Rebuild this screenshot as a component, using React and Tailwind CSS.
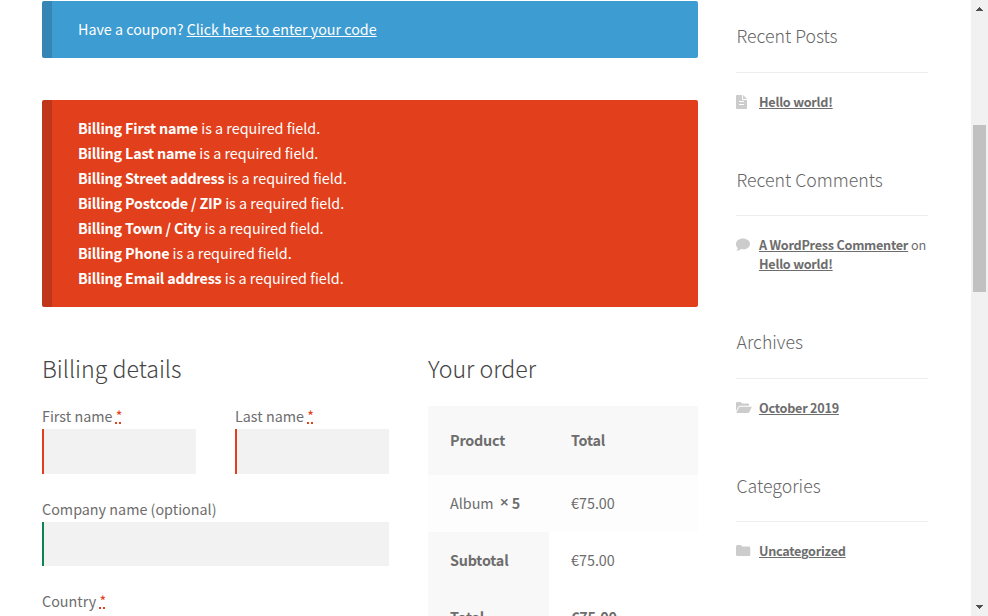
import React from "react";

const fieldErrors = [
  "First name",
  "Last name",
  "Street address",
  "Postcode / ZIP",
  "Town / City",
  "Phone",
  "Email address",
];

function Required() {
  return (
    <abbr
      title="required"
      className="text-[#e2401c] underline decoration-dotted decoration-[1.5px] underline-offset-0"
    >
      *
    </abbr>
  );
}

function Label({ text, required }) {
  return (
    <div className="h-[25px] whitespace-nowrap leading-[23px]">
      {text} {required && <Required />}
    </div>
  );
}

function Field({ label, required, valid, className = "" }) {
  return (
    <div className={className}>
      <Label text={label} required={required} />
      <input
        aria-label={label}
        className={
          "block w-full border-l-2 bg-[#f2f2f2] outline-none " +
          (valid ? "h-11 border-[#0f834d]" : "h-[45px] border-[#e2401c]")
        }
      />
    </div>
  );
}

function Widget({ title, icon, loose, className = "", children }) {
  return (
    <section className={className}>
      <h3 className="pl-[0.5px] text-[17.7px] font-light leading-[26px] text-[#666]">
        {title}
      </h3>
      <div className={"border-t border-[#ededed] " + (loose ? "mt-6" : "mt-[23px]")} />
      <div className="mt-[19px] flex text-[12.65px] leading-[19px]">
        <span className="w-[23px] shrink-0 pt-[3px] text-[#ccc]">{icon}</span>
        <div className="whitespace-nowrap">{children}</div>
      </div>
    </section>
  );
}

function Link({ children }) {
  return (
    <a className="font-bold tracking-[-0.02em] underline decoration-1 underline-offset-1">{children}</a>
  );
}

function Strong({ children }) {
  return <strong className="font-bold tracking-[-0.013em]">{children}</strong>;
}

const FileIcon = () => (
  <svg className="block" width="11" height="14" viewBox="0 0 11 14" fill="currentColor">
    <path
      d="M0 .8Q0 0 .8 0H6v4.200q0 .8.8.8H11v8.200q0 .8-.8.8H.8Q0 14 0 13.200zM7 0l4 4H7zM3 6v1h5V6zM3 9v1h5V9z"
      fillRule="evenodd"
    />
  </svg>
);

const CommentIcon = () => (
  <svg className="block" width="14" height="14" viewBox="0 0 14 14" fill="currentColor">
    <path d="M7 .5c3.900 0 7 2.300 7 5.400s-3.100 5.400-7 5.400c-.7 0-1.400-.1-2-.2C3.900 12.100 2.200 13 .4 13c.9-1 1.300-1.900 1.300-3C.6 9 0 7.500 0 5.900 0 2.800 3.100.5 7 .5z" />
  </svg>
);

const OpenFolderIcon = () => (
  <svg className="block" width="16" height="13" viewBox="0 0 16 13" fill="currentColor">
    <path d="M0 10.300V2Q0 1 1 1h3.600l1.500 1.500h6q1 0 1 1v1.300H4.200q-1.300 0-1.900 1.100z" />
    <path d="M4 5.800h11.200q.8 0 .4.700l-2.400 4.700q-.4.800-1.100.8H.8q-.6 0-.3-.6L3 6.400q.3-.6 1-.6z" />
  </svg>
);

const FolderIcon = () => (
  <svg className="block" width="15" height="13" viewBox="0 0 15 13" fill="currentColor">
    <path d="M0 2.500Q0 1 1.500 1h3.200l1.500 1.500h6.600q1.500 0 1.500 1.400v6.600q0 1.500-1.500 1.500H1.500Q0 12 0 10.500z" />
  </svg>
);

export default function App() {
  return (
    <div className="flex h-[616px] w-[988px] overflow-hidden bg-white font-['Noto_Sans_CJK_SC','Open_Sans',sans-serif] text-[14.35px] text-[#6d6d6d]">
      <main className="ml-[42px] w-[656px] shrink-0 pt-px">
        <div className="h-[57px] rounded-xs border-l-10 border-[#3585b5] bg-[#3d9cd2] pl-[26px] pt-[15px] text-[14.3px] leading-[25px] text-white">
          Have a coupon?{" "}
          <a className="underline decoration-1 underline-offset-1">Click here to enter your code</a>
        </div>

        <ul className="mt-[42px] h-[207px] rounded-xs border-l-10 border-[#bf3618] bg-[#e2401c] pl-[26px] pt-[15px] leading-[25px] text-white">
          {fieldErrors.map((name) => (
            <li key={name} className="h-[25px]">
              <Strong>Billing {name}</Strong> is a required field.
            </li>
          ))}
        </ul>

        <div className="flex gap-[39px] pt-[42px]">
          <section className="w-[347px]">
            <h3 className="h-[55px] text-[23.15px] font-light leading-[38px] text-[#444]">Billing details</h3>
            <div className="flex gap-[39px]">
              <Field label="First name" required className="w-[154px]" />
              <Field label="Last name" required className="w-[154px]" />
            </div>
            <Field label="Company name (optional)" valid className="mt-[23px]" />
            <div className="mt-[23px]">
              <Label text="Country" required />
            </div>
          </section>

          <section className="w-[270px]">
            <h3 className="h-[57px] text-[23.15px] font-light leading-[38px] text-[#444]">Your order</h3>
            <div className="grid grid-cols-[121px_149px] leading-[25px]">
              <div className="h-[69px] bg-[#f8f8f8] pl-[22px] pt-[21px]"><Strong>Product</Strong></div>
              <div className="h-[69px] bg-[#f8f8f8] pl-[22px] pt-[21px]"><Strong>Total</Strong></div>
              <div className="flex h-[57px] bg-[#fdfdfd] pl-[22px] pt-[15px]">
                <span>Album</span>
                <strong className="ml-1.5 flex font-bold">
                  <span className="w-3 font-['Noto_Sans'] text-base font-semibold leading-[25px]">×</span>
                  <span>5</span>
                </strong>
              </div>
              <div className="h-[57px] bg-[#fdfdfd] pl-[22px] pt-[15px]">€75.00</div>
              <div className="h-[57px] bg-[#f8f8f8] pl-[22px] pt-[15px]"><Strong>Subtotal</Strong></div>
              <div className="h-[57px] pl-[22px] pt-[15px]">€75.00</div>
              <div className="h-[57px] bg-[#f8f8f8] pl-[22px] pt-[15px]"><Strong>Total</Strong></div>
              <div className="h-[57px] pl-[22px] pt-[15px]"><Strong>€75.00</Strong></div>
            </div>
          </section>
        </div>
      </main>

      <aside className="ml-[38px] w-[192px] shrink-0 pt-[22px]">
        <Widget title="Recent Posts" icon={<FileIcon />} loose>
          <Link>Hello world!</Link>
        </Widget>
        <Widget title="Recent Comments" icon={<CommentIcon />} className="mt-[55px]">
          <Link>A WordPress Commenter</Link> on
          <br />
          <Link>Hello world!</Link>
        </Widget>
        <Widget title="Archives" icon={<OpenFolderIcon />} loose className="mt-[55px]">
          <Link>October 2019</Link>
        </Widget>
        <Widget title="Categories" icon={<FolderIcon />} className="mt-[55px]">
          <Link>Uncategorized</Link>
        </Widget>
      </aside>

      <div className="ml-auto flex w-[17px] shrink-0 flex-col items-center bg-[#f1f1f1]">
        <svg className="block shrink-0" width="17" height="17" shapeRendering="crispEdges" fill="#505050">
          <path d="M8 7h1v1h1v1h1v1h1v1H5v-1h1V9h1V8h1z" />
        </svg>
        <div className="mt-[108px] h-[167px] w-[13px] bg-[#c1c1c1]" />
        <svg className="mt-auto block shrink-0" width="17" height="17" shapeRendering="crispEdges" fill="#505050">
          <path d="M5 6h7v1h-1v1h-1v1H9v1H8V9H7V8H6V7H5z" />
        </svg>
      </div>
    </div>
  );
}
